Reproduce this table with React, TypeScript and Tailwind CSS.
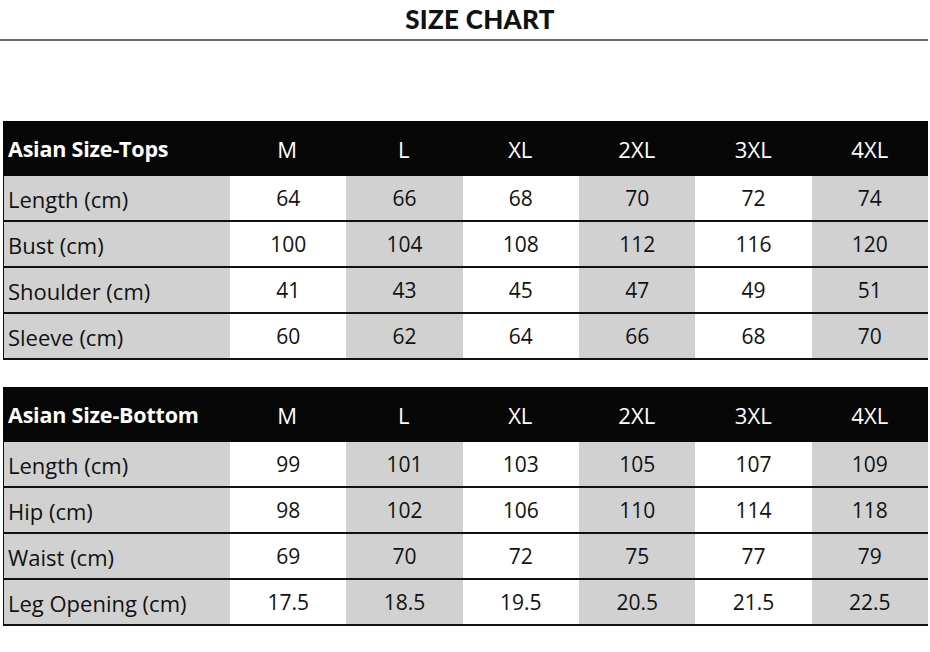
import type { ReactNode } from 'react';

type SizeTable = {
    title: string;
    rows: { label: string; values: string[] }[];
};

const sizes = ['M', 'L', 'XL', '2XL', '3XL', '4XL'];

const tables: SizeTable[] = [
    {
        title: 'Asian Size-Tops',
        rows: [
            { label: 'Length (cm)', values: ['64', '66', '68', '70', '72', '74'] },
            { label: 'Bust (cm)', values: ['100', '104', '108', '112', '116', '120'] },
            { label: 'Shoulder (cm)', values: ['41', '43', '45', '47', '49', '51'] },
            { label: 'Sleeve (cm)', values: ['60', '62', '64', '66', '68', '70'] },
        ],
    },
    {
        title: 'Asian Size-Bottom',
        rows: [
            { label: 'Length (cm)', values: ['99', '101', '103', '105', '107', '109'] },
            { label: 'Hip (cm)', values: ['98', '102', '106', '110', '114', '118'] },
            { label: 'Waist (cm)', values: ['69', '70', '72', '75', '77', '79'] },
            { label: 'Leg Opening (cm)', values: ['17.5', '18.5', '19.5', '20.5', '21.5', '22.5'] },
        ],
    },
];

function Row({ children, className }: { children: ReactNode; className?: string }) {
    return (
        <div className={`grid grid-cols-[226px_repeat(6,1fr)] ${className ?? ''}`}>
            {children}
        </div>
    );
}

function ChartTable({ table }: { table: SizeTable }) {
    return (
        <section className="ml-[3px] w-[925px]">
            <Row className="h-[55px] bg-[#070707] text-white">
                <div className="flex items-center pl-[5px] pt-[2px] text-[21.5px] font-bold tracking-[-0.2px]">
                    {table.title}
                </div>
                {sizes.map((size) => (
                    <div key={size} className="flex items-center justify-center pt-[2px] text-[22px]">
                        {size}
                    </div>
                ))}
            </Row>
            {table.rows.map((row) => (
                <Row
                    key={row.label}
                    className="h-[46px] border-b-2 border-l border-[#111]"
                >
                    <div className="flex items-center bg-[#d1d1d1] pl-[4px] pt-[2px] text-[22px] tracking-[0px]">
                        {row.label}
                    </div>
                    {row.values.map((value, i) => (
                        <div
                            key={i}
                            className={`flex items-center justify-center pt-[2px] text-[21px] ${
                                i % 2 === 0 ? 'bg-white' : 'bg-[#d1d1d1]'
                            }`}
                        >
                            {value}
                        </div>
                    ))}
                </Row>
            ))}
        </section>
    );
}

export default function App() {
    return (
        <main
            className="h-[652px] w-[930px] bg-white text-[#111]"
            style={{ fontFamily: '"Open Sans", "Noto Sans", sans-serif' }}
        >
            <header className="w-[928px] border-b-2 border-[#6a6a6a]">
                <h1
                    className="flex h-[39px] items-center justify-center pl-[32px] text-[26px] font-black tracking-[0.3px]"
                    style={{ fontFamily: 'Lato, "DejaVu Sans", sans-serif' }}
                >
                    SIZE CHART
                </h1>
            </header>
            <div className="pt-[80px]">
                <ChartTable table={tables[0]} />
            </div>
            <div className="pt-[27px]">
                <ChartTable table={tables[1]} />
            </div>
        </main>
    );
}
